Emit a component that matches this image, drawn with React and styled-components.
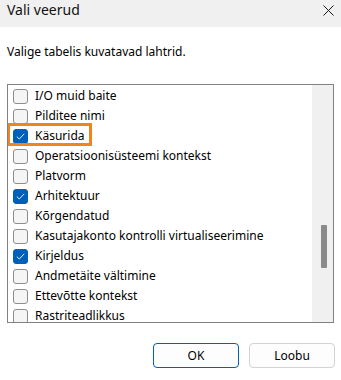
import React from 'react';
import styled, { createGlobalStyle } from 'styled-components';

const GlobalStyle = createGlobalStyle`
  html, body {
    margin: 0;
    padding: 0;
    background: #ffffff;
  }
  body {
    font-family: 'Noto Sans', 'Open Sans', sans-serif;
    color: #000;
  }
`;

const columns = [
  { label: 'I/O muid baite', checked: false },
  { label: 'Pilditee nimi', checked: false },
  { label: 'Käsurida', checked: true },
  { label: 'Operatsioonisüsteemi kontekst', checked: false },
  { label: 'Platvorm', checked: false },
  { label: 'Arhitektuur', checked: true },
  { label: 'Kõrgendatud', checked: false },
  { label: 'Kasutajakonto kontrolli virtualiseerimine', checked: false },
  { label: 'Kirjeldus', checked: true },
  { label: 'Andmetäite vältimine', checked: false },
  { label: 'Ettevõtte kontekst', checked: false },
  { label: 'Rastriteadlikkus', checked: false },
];

const Dialog = styled.div`
  width: 341px;
  height: 380px;
  display: flex;
  flex-direction: column;
  background: #fff;
  font-size: 12px;
`;

const TitleBar = styled.div`
  height: 27px;
  background: #f0f0f0;
  display: flex;
  justify-content: space-between;
  align-items: flex-start;
  padding: 0 7px 0 7px;
  box-sizing: border-box;
`;

const Title = styled.div`
  font-size: 14px;
  line-height: 20px;
  color: #111;
`;

const CloseButton = styled.div`
  width: 11px;
  height: 11px;
  margin-top: 5px;
  display: flex;
`;

const Description = styled.div`
  padding: 17px 7px 0;
  line-height: 16px;
`;

const ListBox = styled.div`
  position: relative;
  margin: 24px 7px 0 7px;
  height: 239px;
  border: 1px solid #828282;
  box-sizing: border-box;
  display: flex;
  overflow: hidden;
`;

const Items = styled.div`
  flex: 1;
  padding-top: 1px;
  overflow: hidden;
`;

const Row = styled.div`
  height: 20px;
  display: flex;
  align-items: center;
  padding-left: 5px;
  gap: 7px;
  white-space: nowrap;
`;

const Box = styled.div`
  width: 15px;
  height: 15px;
  box-sizing: border-box;
  border-radius: 3px;
  border: 1px solid ${p => (p.$checked ? '#005fb8' : '#8d8d8d')};
  background: ${p => (p.$checked ? '#005fb8' : '#f5f5f5')};
  display: flex;
  align-items: center;
  justify-content: center;
  flex-shrink: 0;
`;

const Label = styled.span`
  line-height: 16px;
`;

const ScrollTrack = styled.div`
  width: 21px;
  background: #f0f0f0;
  display: flex;
  flex-direction: column;
  align-items: flex-start;
`;

const Thumb = styled.div`
  width: 6px;
  height: 43px;
  margin-left: 9px;
  margin-top: ${p => p.$offset}px;
  background: #8a8a8a;
  border-radius: 1px;
`;

const Highlight = styled.div`
  position: absolute;
  left: -1px;
  top: 38px;
  width: 85px;
  height: 23px;
  border: 3px solid #f0851d;
  box-sizing: border-box;
  pointer-events: none;
`;

const ButtonRow = styled.div`
  display: flex;
  justify-content: flex-end;
  gap: 10px;
  padding: 20px 6px 0 0;
`;

const Button = styled.button`
  width: 86px;
  height: 25px;
  font-family: inherit;
  font-size: 12px;
  color: #000;
  background: #fdfdfd;
  border: 1px solid ${p => (p.$primary ? '#005fb8' : '#d3d3d3')};
  border-radius: 4px;
  padding: 0;
`;

function Check() {
  return (
    <svg width="9" height="7" viewBox="0 0 9 7" fill="none">
      <path d="M0.8 3.6 L3.3 6 L8.2 0.9" stroke="#fff" strokeWidth="0.9" />
    </svg>
  );
}

export default function App() {
  return (
    <Dialog>
      <GlobalStyle />
      <TitleBar>
        <Title>Vali veerud</Title>
        <CloseButton>
          <svg width="11" height="11" viewBox="0 0 11 11">
            <path d="M0.5 0.5 L10.5 10.5 M10.5 0.5 L0.5 10.5" stroke="#1a1a1a" strokeWidth="1" />
          </svg>
        </CloseButton>
      </TitleBar>
      <Description>Valige tabelis kuvatavad lahtrid.</Description>
      <ListBox>
        <Items>
          {columns.map(c => (
            <Row key={c.label}>
              <Box $checked={c.checked}>{c.checked && <Check />}</Box>
              <Label>{c.label}</Label>
            </Row>
          ))}
        </Items>
        <ScrollTrack>
          <Thumb $offset={140} />
        </ScrollTrack>
        <Highlight />
      </ListBox>
      <ButtonRow>
        <Button $primary>OK</Button>
        <Button>Loobu</Button>
      </ButtonRow>
    </Dialog>
  );
}
